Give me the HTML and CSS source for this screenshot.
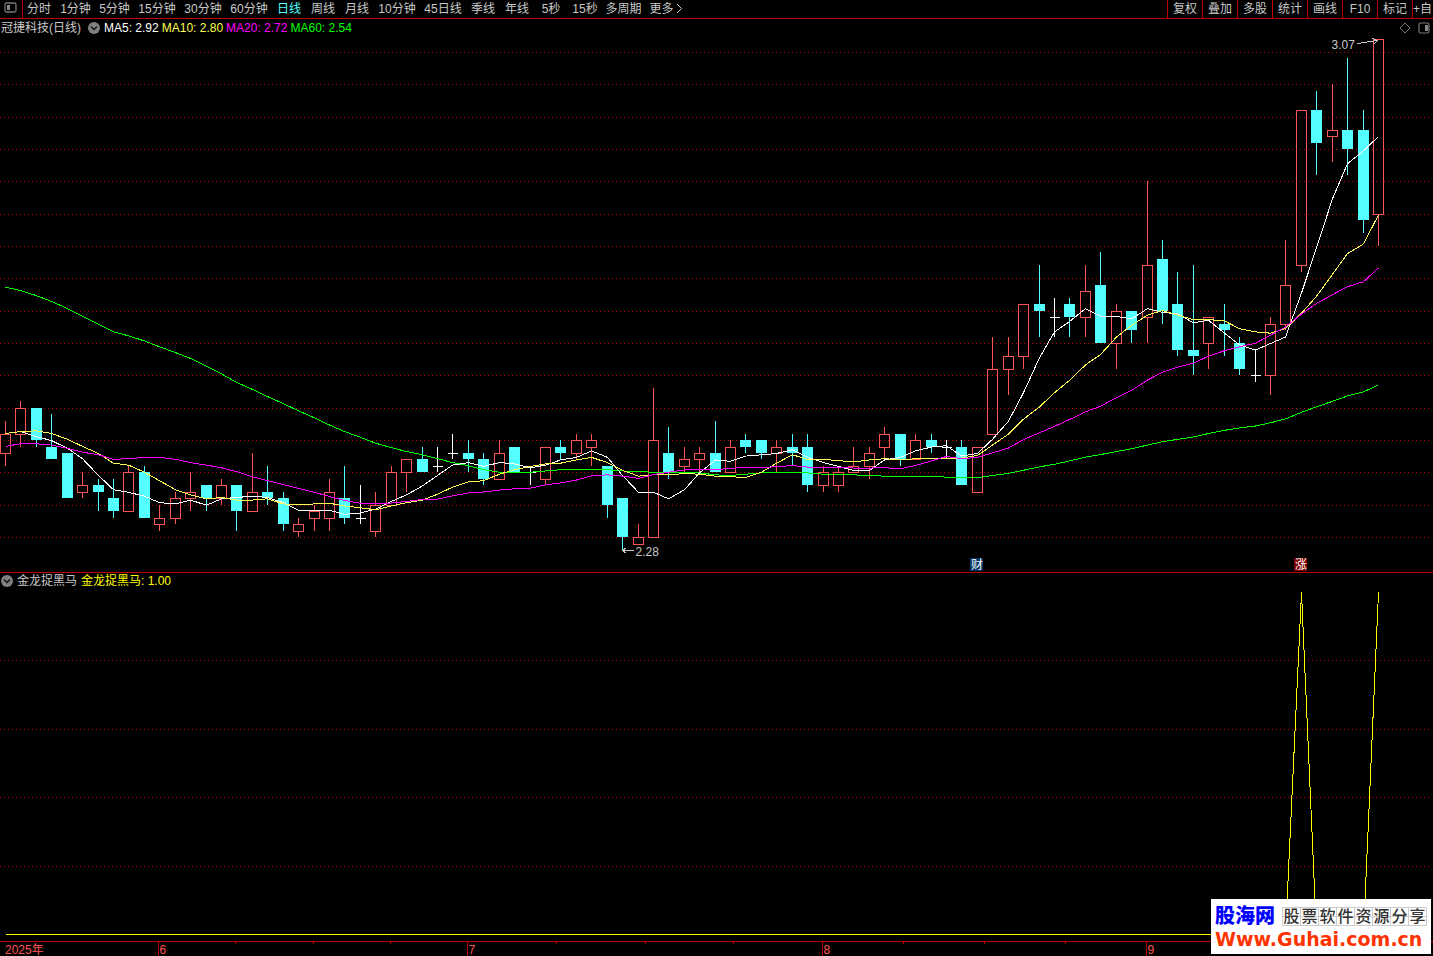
FILE: index.html
```html
<!DOCTYPE html>
<html lang="zh-CN">
<head>
<meta charset="utf-8">
<title>冠捷科技 日线</title>
<link rel="stylesheet" href="styles.css">
</head>
<body>
<div class="app">
  <header class="toolbar">
    <button class="side-toggle" type="button" aria-label="侧栏">
      <svg width="13" height="11" viewBox="0 0 13 11"><rect x="1" y="1" width="11" height="9" rx="1.5" fill="none" stroke="#777" stroke-width="1.3"/><rect x="3" y="3" width="3" height="5" fill="#888"/></svg>
    </button>
    <nav class="periods">
      <button class="tab" type="button">分时</button>
      <button class="tab tab-mid" type="button">1分钟</button>
      <button class="tab tab-mid" type="button">5分钟</button>
      <button class="tab tab-long" type="button">15分钟</button>
      <button class="tab tab-long" type="button">30分钟</button>
      <button class="tab tab-long" type="button">60分钟</button>
      <button class="tab tab-active" type="button">日线</button>
      <button class="tab" type="button">周线</button>
      <button class="tab" type="button">月线</button>
      <button class="tab tab-long" type="button">10分钟</button>
      <button class="tab tab-long" type="button">45日线</button>
      <button class="tab" type="button">季线</button>
      <button class="tab" type="button">年线</button>
      <button class="tab" type="button">5秒</button>
      <button class="tab" type="button">15秒</button>
      <button class="tab tab-wide" type="button">多周期</button>
      <button class="tab tab-wide" type="button">更多<svg class="more" width="10" height="11" viewBox="0 0 10 11"><path d="M3 1L7.500 5.500L3 10" fill="none" stroke="#c8c8c8"/></svg></button>
    </nav>
    <div class="tools">
      <button class="tool" type="button">复权</button>
      <button class="tool" type="button">叠加</button>
      <button class="tool" type="button">多股</button>
      <button class="tool" type="button">统计</button>
      <button class="tool" type="button">画线</button>
      <button class="tool" type="button">F10</button>
      <button class="tool" type="button">标记</button>
      <button class="tool tool-add" type="button">+自</button>
    </div>
  </header>

  <main class="panel">
    <div class="legend">
      <span class="name">冠捷科技(日线)</span>
      <button class="drop drop-main" type="button" aria-label="指标菜单"><svg width="12" height="12" viewBox="0 0 12 12"><circle cx="6" cy="6" r="6" fill="#808080"/><path d="M3 4.500L6 7.500L9 4.500" fill="none" stroke="#111" stroke-width="1.500"/></svg></button>
      <span class="averages">
        <span class="ma5">MA5: 2.92</span>
        <span class="ma10">MA10: 2.80</span>
        <span class="ma20">MA20: 2.72</span>
        <span class="ma60">MA60: 2.54</span>
      </span>
      <span class="corner">
        <button class="drop" type="button" aria-label="标识"><svg width="12" height="12" viewBox="0 0 12 12"><path d="M6 1L11 6L6 11L1 6Z" fill="none" stroke="#777"/></svg></button>
        <button class="drop" type="button" aria-label="右侧栏"><svg width="12" height="12" viewBox="0 0 12 12"><rect x="1" y="1" width="10" height="10" rx="1.500" fill="none" stroke="#777" stroke-width="1.200"/><rect x="7" y="3" width="3" height="6" fill="#888"/></svg></button>
      </span>
    </div>
    <div class="plot"><svg id="price" class="canvas" role="img" aria-label="K线图"></svg></div>
  </main>

  <section class="panel">
    <div class="legend legend-sub">
      <button class="drop" type="button" aria-label="指标菜单"><svg width="12" height="12" viewBox="0 0 12 12"><circle cx="6" cy="6" r="6" fill="#808080"/><path d="M3 4.500L6 7.500L9 4.500" fill="none" stroke="#111" stroke-width="1.500"/></svg></button>
      <span class="name">金龙捉黑马</span>
      <span class="signal">金龙捉黑马: 1.00</span>
    </div>
    <div class="plot"><svg id="signal" class="canvas" role="img" aria-label="金龙捉黑马"></svg></div>
  </section>

  <footer class="axis"><svg id="axis" class="canvas" role="img" aria-label="时间轴"></svg></footer>

  <a class="brand" href="#">
    <span class="brand-top"><b class="brand-name">股海网</b><span class="brand-grid"><i>股</i><i>票</i><i>软</i><i>件</i><i>资</i><i>源</i><i>分</i><i>享</i></span></span>
    <span class="brand-url">Www.Guhai.com.cn</span>
  </a>
</div>
<script src="chart.js"></script>
</body>
</html>
```

FILE: styles.css
```css
* { box-sizing: border-box; }

body {
  margin: 0;
  background: #000;
  color: #c8c8c8;
  font: 12px/18px "Liberation Sans", "Noto Sans CJK SC", sans-serif;
}

button {
  margin: 0;
  padding: 0;
  border: 0;
  background: none;
  color: inherit;
  font: inherit;
  white-space: nowrap;
}

.app {
  position: relative;
  display: grid;
  grid-template-columns: minmax(0, 1fr);
  grid-template-rows: 19px minmax(0, 554fr) minmax(0, 368fr) 15px;
  height: 100vh;
  overflow: hidden;
}

.toolbar {
  display: flex;
  border-bottom: 1px solid #c00000;
  line-height: 18px;
}

.side-toggle {
  display: flex;
  flex: none;
  width: 23px;
  margin-right: -1px;
  padding: 2px 0 0 4px;
  border-right: 1px solid #c00000;
}

.periods { display: flex; flex: 1; min-width: 0; overflow: hidden; }
.tab { flex: none; width: 34px; height: 18px; text-align: center; }
.tab-mid { width: 39px; }
.tab-long { width: 46px; }
.tab-wide { width: 43px; }
.tab-active { color: #54ffff; }
.more { vertical-align: -1px; }

.tools { display: flex; flex: none; }
.tool {
  width: 35px;
  height: 18px;
  border-left: 1px solid #c00000;
  text-align: center;
}
.tool-add { width: 21px; text-align: left; }

.panel {
  display: flex;
  flex-direction: column;
  min-height: 0;
}
main.panel { border-bottom: 1px solid #c00000; }

.legend {
  display: flex;
  flex: none;
  align-items: center;
  gap: 4px;
  height: 19px;
  padding: 0 3px 1px 1px;
  white-space: nowrap;
}
.legend-sub { height: 17px; }
.drop { display: flex; }
.drop-main { margin-left: 3px; }
.averages { display: flex; gap: 3px; }
.ma5 { color: #fff; }
.ma10 { color: #ffff54; }
.ma20 { color: #f0f; }
.ma60 { color: #0f0; }
.signal { color: #ff0; }
.corner { display: flex; gap: 7px; margin-left: auto; }

.plot { flex: 1; min-height: 0; }
.canvas { display: block; width: 100%; height: 100%; }
.axis { border-top: 1px solid #c00000; }

.canvas { shape-rendering: crispEdges; }
.canvas text { font: 12px "Liberation Sans", "Noto Sans CJK SC", sans-serif; fill: #c8c8c8; }
.canvas .date { fill: #ff5454; }
.canvas .badge { fill: #fff; }
.grid { stroke: #c00000; stroke-dasharray: 1 3; }
.tick { stroke: #c00000; }
.up { stroke: #ff5454; fill: none; }
.down { stroke: #54ffff; fill: #54ffff; }
.flat { stroke: #fff; fill: none; }
.line { fill: none; }
.line5 { stroke: #fff; }
.line10 { stroke: #ffff54; }
.line20 { stroke: #f0f; }
.line60 { stroke: #0f0; }
.line-signal { stroke: #ff0; }
.arrow { fill: none; stroke: #c8c8c8; }
.badge-report { fill: #003366; }
.badge-rise { fill: #800000; }

.brand {
  position: absolute;
  right: 2px;
  bottom: 2px;
  display: flex;
  flex-direction: column;
  width: 220px;
  padding: 6px 3px 3px 4px;
  background: #fff;
  text-decoration: none;
}
.brand-top { display: flex; align-items: center; gap: 7px; height: 22px; }
.brand-name { color: #00f; font-size: 20px; font-weight: 900; line-height: 22px; }
.brand-grid {
  display: flex;
  border: 1px solid #ccc;
  background: linear-gradient(#ccc, #ccc) 0 50% / 100% 1px no-repeat;
  color: #333;
  font-size: 16px;
  line-height: 17px;
}
.brand-grid i { width: 18px; border-right: 1px solid #ccc; font-style: normal; font-weight: 500; text-align: center; }
.brand-grid i:last-child { width: 17px; border-right: 0; }
.brand-url {
  color: #ff3300;
  font: bold 19px/24px "DejaVu Sans", sans-serif;
  white-space: nowrap;
}
```

FILE: chart.js
```javascript
// Daily bars in cents: kind (u up, d down, f flat), body top, body bottom, high, low
const bars = `u246,243,248,241 u250,246,251,244 d250,245,250,244 d244,242,249,242 d243,236,243,236
u238,237,240,236 d238,237,239,234 d236,234,239,233 u240,234,241,234 d240,233,241,233
u233,232,235,231 u236,233,237,232 u237,236,240,234 d238,236,238,234 u238,236,239,235
d238,234,238,231 u237,234,243,234 d237,236,241,235 d236,232,237,231 u232,231,233,230
u234,233,235,231 u237,233,239,231 d236,233,241,232 f233,233,238,232 u235,231,237,230
u240,235,241,235 u242,240,242,237 d242,240,244,240 f241,241,244,240 f243,243,246,242
d243,242,245,240 d242,239,243,238 u243,239,245,239 d244,240,244,240 f240,240,241,238
u244,239,244,238 d244,243,245,242 u245,243,246,242 u245,244,246,241 d241,235,241,233
d236,230,236,228 u230,229,232,229 u245,230,253,230 d243,240,247,239 u242,241,244,240
u243,242,244,240 d243,240,248,240 u244,240,245,240 d245,244,246,243 d245,243,245,242
u244,243,245,240 d244,243,246,241 d244,238,246,237 u240,238,241,237 u240,238,241,237
u241,240,244,240 u243,241,244,239 u246,244,247,242 d246,242,246,241 u245,242,246,242
d245,244,246,243 f244,244,245,242 d244,238,245,238 u244,237,244,237 u256,246,261,246
u258,256,261,252 u266,258,266,256 d266,265,272,261 f264,264,267,261 d266,264,267,261
u268,264,272,261 d269,260,274,260 u265,260,266,256 d265,262,265,260 u272,264,285,260
d273,265,276,263 d266,259,271,258 d259,258,272,255 u264,260,264,256 d263,262,266,258
d260,256,261,255 f255,255,259,254 u263,255,264,252 u269,263,276,262 u296,272,296,271
d296,291,299,286 u293,292,300,288 d293,290,304,286 d293,279,296,277 u307,280,307,275`
  .split(/\s+/).map(s => {
    const [top, bottom, high, low] = s.slice(1).split(',').map(Number);
    return { kind: s[0], top, bottom, high, low, close: s[0] === 'd' ? bottom : top };
  });

// Averages for the bars whose window reaches back before the loaded history
const seeds = {
  5: [246.1, 246.4, 245.6, 245],
  10: [246.1, 246.4, 246.5, 246.1, 245.2, 244.1, 243, 241.5, 241.2],
  20: [244.1, 244.5, 244.5, 244.3, 243.8, 243.2, 242.8, 242.1, 242.2, 242.4, 242.4, 242.1, 241.6, 241.2, 240.8, 240.2, 239.4, 238.8, 238.2],
  60: [268.7, 268.2, 267.4, 266.5, 265.4, 264.2, 263, 261.8, 261.2, 260.4, 259.5, 258.6, 257.7, 256.5, 255.3, 254, 252.9, 251.8, 250.7, 249.6,
    248.5, 247.4, 246.4, 245.5, 244.6, 243.9, 243.3, 242.8, 242.2, 241.6, 241.1, 240.5, 240.1, 240, 240.1, 240.3, 240.5, 240.6, 240.6, 240.5,
    240.3, 240.2, 240.1, 240, 240, 240, 239.7, 239.6, 239.8, 240, 240, 240, 240, 239.8, 239.8, 239.7, 239.6, 239.5, 239.4]
};

const average = n => bars.map((bar, i) => i < n - 1
  ? seeds[n][i]
  : bars.slice(i - n + 1, i + 1).reduce((sum, b) => sum + b.close, 0) / n);

function add(svg, tag, attrs, text) {
  const el = document.createElementNS('http://www.w3.org/2000/svg', tag);
  for (const key in attrs) el.setAttribute(key, attrs[key]);
  if (text) el.textContent = text;
  svg.appendChild(el);
}
const path = (svg, cls, d) => add(svg, 'path', { class: cls, d });

function prepare(id) {
  const svg = document.getElementById(id);
  svg.replaceChildren();
  const { width, height } = svg.getBoundingClientRect();
  const step = (width - 60) / (bars.length - 1);
  return { svg, width, height, x: i => Math.round(5 + i * step) + 0.5 };
}

const polyline = (svg, cls, values, x, y) =>
  path(svg, 'line ' + cls, 'M' + values.map((v, i) => x(i) + ' ' + y(v)).join('L'));

function drawPrice() {
  const { svg, width, height, x } = prepare('price');
  const unit = height / 82.55;
  const y = c => Math.round(1 + (307 - c) * unit) + 0.5;
  for (let c = 305; c >= 230; c -= 5) path(svg, 'grid', `M0 ${y(c)}H${width - 3}`);
  bars.forEach((b, i) => {
    const cx = x(i), cls = { u: 'up', d: 'down', f: 'flat' }[b.kind];
    const base = y(b.bottom) - (b.kind === 'd' ? 1 : 0);
    path(svg, cls, `M${cx} ${y(b.high) - 0.5}V${y(b.top)}M${cx} ${base}V${Math.max(base, y(b.low) - 0.5)}`);
    if (b.kind === 'f') path(svg, cls, `M${cx - 5} ${y(b.top)}h10`);
    else add(svg, 'rect', { class: cls, x: cx - 5, y: y(b.top), width: 10, height: base - y(b.top) });
  });
  for (const n of [60, 5, 10, 20]) polyline(svg, 'line' + n, average(n), x, c => 1.5 + (307 - c) * unit);

  const hx = x(89), hy = y(307), lx = x(40), ly = y(228);
  add(svg, 'text', { x: hx - 47, y: hy + 9 }, '3.07');
  path(svg, 'arrow', `M${hx - 21} ${hy + 4}L${hx - 1} ${hy + 1}M${hx - 6} ${hy - 1}L${hx - 1} ${hy + 1}L${hx - 5} ${hy + 5}`);
  add(svg, 'text', { x: lx + 13, y: ly + 5 }, '2.28');
  path(svg, 'arrow', `M${lx + 11} ${ly}H${lx}M${lx + 4} ${ly - 3}L${lx} ${ly}L${lx + 4} ${ly + 3}`);

  [[63, '财', 'badge-report'], [84, '涨', 'badge-rise']].forEach(([i, label, cls]) => {
    add(svg, 'rect', { class: cls, x: x(i) - 7.5, y: height - 14, width: 13, height: 13 });
    add(svg, 'text', { class: 'badge', x: x(i) - 6.5, y: height - 3 }, label);
  });
}

function drawSignal() {
  const { svg, width, height, x } = prepare('signal');
  const y = v => Math.round(height - 7 - v * (height - 9)) + 0.5;
  for (const v of [0.2, 0.4, 0.6, 0.8]) path(svg, 'grid', `M0 ${y(v)}H${width - 3}`);
  polyline(svg, 'line-signal', bars.map((b, i) => (i === 84 || i === 89 ? 1 : 0)), x, y);
}

function drawAxis() {
  const { svg, x } = prepare('axis');
  const months = [[10, '6'], [30, '7'], [53, '8'], [74, '9']];
  add(svg, 'text', { class: 'date', x: 5, y: 12 }, '2025年');
  months.forEach(([i, label], m) => {
    const start = x(i) - 1;
    path(svg, 'tick', `M${start} 0V14`);
    add(svg, 'text', { class: 'date', x: start + 1, y: 12 }, label);
    if (months[m + 1]) {
      const span = x(months[m + 1][0]) - 1 - start;
      for (let q = 1; q < 4; q++) path(svg, 'tick', `M${Math.floor(start + span * q / 4) + 0.5} 0v2`);
    }
  });
}

function draw() {
  drawPrice();
  drawSignal();
  drawAxis();
}

draw();
addEventListener('resize', draw);
```
